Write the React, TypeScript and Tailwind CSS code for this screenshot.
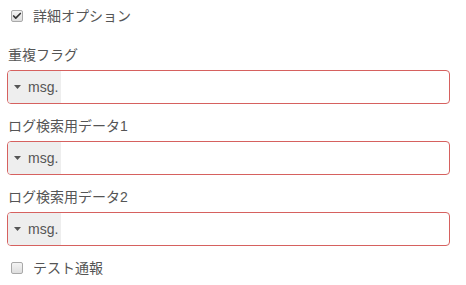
import { Check } from "lucide-react";

function Box({ checked }: { checked?: boolean }) {
  return (
    <span className="flex h-[12px] w-[12px] items-center justify-center rounded-[2px] border border-[#a9a9a9] bg-gradient-to-b from-[#f4f4f4] to-[#dedede]">
      {checked && <Check className="h-[10px] w-[10px] text-[#333]" strokeWidth={4} />}
    </span>
  );
}

function CheckRow({ label, checked }: { label: string; checked?: boolean }) {
  return (
    <div className="flex h-5 items-center">
      <span className="ml-[4px] mr-[10px]">
        <Box checked={checked} />
      </span>
      <span className="pt-[1px]">{label}</span>
    </div>
  );
}

function Field({ label }: { label: string }) {
  return (
    <div>
      <div className="ml-[1px] mb-[5px] flex h-5 items-center">{label}</div>
      <div className="flex h-[34px] overflow-hidden rounded-[4px] border border-[#d6615f] bg-white">
        <div className="flex w-[53px] items-center bg-[#eeeeee] pl-[6px]">
          <svg width="7" height="4" viewBox="0 0 7 4" className="mr-[7px]">
            <path d="M0 0h7L3.5 4z" fill="#555" />
          </svg>
          <span className="text-[#555]">msg.</span>
        </div>
        <div className="flex-1" />
      </div>
    </div>
  );
}

export default function App() {
  return (
    <div className="h-[285px] w-[466px] bg-white px-[7px] pt-[6px] text-[14px] text-[#555] [font-family:'Liberation_Sans','Noto_Sans_CJK_JP',sans-serif]">
      <div className="w-[443px]">
        <CheckRow label="詳細オプション" checked />
        <div className="mt-[19px] flex flex-col gap-[12px]">
          <Field label="重複フラグ" />
          <Field label="ログ検索用データ1" />
          <Field label="ログ検索用データ2" />
          <CheckRow label="テスト通報" />
        </div>
      </div>
    </div>
  );
}
